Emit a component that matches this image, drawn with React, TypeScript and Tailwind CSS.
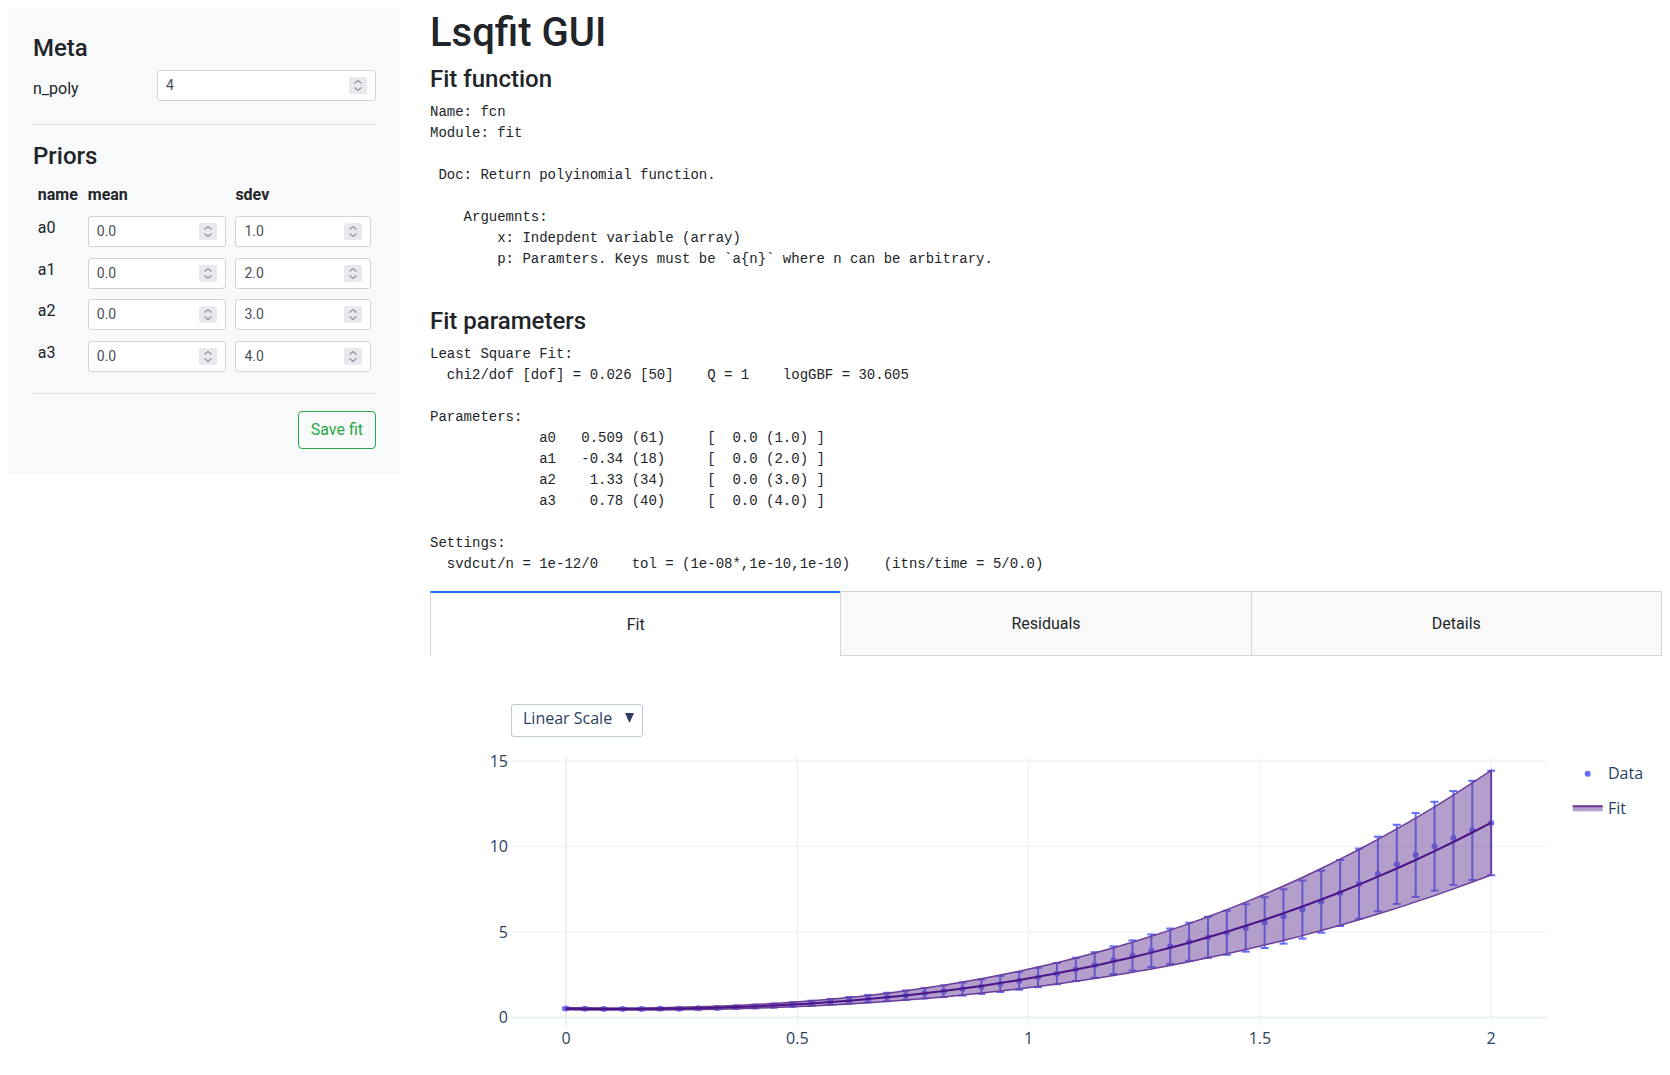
import React from "react";

const fnDoc = `Name: fcn
Module: fit

 Doc: Return polyinomial function.

    Arguemnts:
        x: Indepdent variable (array)
        p: Paramters. Keys must be \`a{n}\` where n can be arbitrary.
    `;

const fitReport = `Least Square Fit:
  chi2/dof [dof] = 0.026 [50]    Q = 1    logGBF = 30.605

Parameters:
             a0   0.509 (61)     [  0.0 (1.0) ]  
             a1   -0.34 (18)     [  0.0 (2.0) ]  
             a2    1.33 (34)     [  0.0 (3.0) ]  
             a3    0.78 (40)     [  0.0 (4.0) ]  

Settings:
  svdcut/n = 1e-12/0    tol = (1e-08*,1e-10,1e-10)    (itns/time = 5/0.0)`;

const priors = [
  { name: "a0", mean: "0.0", sdev: "1.0" },
  { name: "a1", mean: "0.0", sdev: "2.0" },
  { name: "a2", mean: "0.0", sdev: "3.0" },
  { name: "a3", mean: "0.0", sdev: "4.0" },
];

// little up/down arrows of a number field
const Spinner = () => (
  <div className="flex h-[17px] w-[18px] shrink-0 flex-col items-center justify-center gap-[3px] rounded-[2px] bg-[#e9e9ed]">
    <svg width="8" height="4" viewBox="0 0 8 4">
      <path d="M0.5 3.5 L4 0.5 L7.5 3.5" fill="none" stroke="#8f8f9d" strokeWidth="1.1" />
    </svg>
    <svg width="8" height="4" viewBox="0 0 8 4">
      <path d="M0.5 0.5 L4 3.5 L7.5 0.5" fill="none" stroke="#8f8f9d" strokeWidth="1.1" />
    </svg>
  </div>
);

const NumberBox = ({ value }: { value: string }) => (
  <div className="flex h-[31px] items-center rounded-[3px] border border-[#ced4da] bg-white px-2 text-[14px] text-[#495057]">
    <span className="flex-1">{value}</span>
    <Spinner />
  </div>
);

const Sidebar = () => (
  <aside className="w-[391px] shrink-0 bg-[#f8f9fa] px-6 pb-[25px] pt-6">
    <h4 className="mb-[7px] pt-[1px] text-[24px] font-medium leading-[1.2]">Meta</h4>
    <div className="grid grid-cols-[124px_1fr]">
      <label className="py-[7px] text-[16px] leading-6">n_poly</label>
      <NumberBox value="4" />
    </div>

    <hr className="my-4 border-t border-black/10" />

    <h4 className="mb-[7px] pt-[1px] text-[24px] font-medium leading-[1.2]">Priors</h4>
    <div className="grid grid-cols-[50px_147.6px_1fr] text-[16px]">
      <div className="px-[4.8px] pb-[3.8px] pt-[5.8px] font-bold leading-6">name</div>
      <div className="px-[4.8px] pb-[3.8px] pt-[5.8px] font-bold leading-6">mean</div>
      <div className="px-[4.8px] pb-[3.8px] pt-[5.8px] font-bold leading-6">sdev</div>
      {priors.map((p) => (
        <React.Fragment key={p.name}>
          <div className="px-[4.8px] py-[5.25px] leading-6">{p.name}</div>
          <div className="px-[4.8px] py-[5.25px]">
            <NumberBox value={p.mean} />
          </div>
          <div className="px-[4.8px] py-[5.25px]">
            <NumberBox value={p.sdev} />
          </div>
        </React.Fragment>
      ))}
    </div>

    <hr className="my-4 border-t border-black/10" />

    <div className="flex justify-end pt-[1px]">
      <button className="rounded border border-[#28a745] px-3 py-1.5 text-[16px] leading-6 text-[#28a745]">
        Save fit
      </button>
    </div>
  </aside>
);

// ---- chart ----
const X = (v: number) => 136 + 462.6 * v;
const Y = (v: number) => 361.4 - 17.1 * v;

const fit = (x: number) => 0.509 - 0.34 * x + 1.33 * x * x + 0.78 * x * x * x;
const err = (x: number) => 0.061 + 0.479 * Math.pow(x, 2.645);

const xs = Array.from({ length: 50 }, (_, i) => (2 * i) / 49);
const data = xs.map((x, i) => ({
  x,
  y: fit(x) + 0.12 * err(x) * Math.sin(i * 12.9898 + 1.3),
  e: err(x),
}));

const upper = xs.map((x) => `${X(x).toFixed(1)},${Y(fit(x) + err(x)).toFixed(1)}`);
const lower = xs.map((x) => `${X(x).toFixed(1)},${Y(fit(x) - err(x)).toFixed(1)}`);
const mid = xs.map((x) => `${X(x).toFixed(1)},${Y(fit(x)).toFixed(1)}`);
const bandPoints = [...upper, ...[...lower].reverse()].join(" ");

const Chart = () => {
  const font = { fontFamily: "'Open Sans', sans-serif" };
  return (
    <div className="relative h-[450px] w-full">
      <svg width="1232" height="450" className="block" style={font}>
        {/* grid */}
        {[5, 10, 15].map((v) => (
          <line key={v} x1={81} x2={1117} y1={Y(v)} y2={Y(v)} stroke="#ebf0f8" strokeWidth={1} />
        ))}
        {[0.5, 1, 1.5, 2].map((v) => (
          <line key={v} x1={X(v)} x2={X(v)} y1={101} y2={370} stroke="#ebf0f8" strokeWidth={1} />
        ))}
        <line x1={81} x2={1117} y1={Y(0)} y2={Y(0)} stroke="#ebf0f8" strokeWidth={2} />
        <line x1={X(0)} x2={X(0)} y1={101} y2={370} stroke="#ebf0f8" strokeWidth={2} />

        {/* tick labels */}
        {[0, 5, 10, 15].map((v) => (
          <text key={v} x={78} y={Y(v)} dy="0.36em" textAnchor="end" fontSize={16} fill="#2a3f5f">
            {v}
          </text>
        ))}
        {[
          [0, "0"],
          [0.5, "0.5"],
          [1, "1"],
          [1.5, "1.5"],
          [2, "2"],
        ].map(([v, t]) => (
          <text key={t as string} x={X(v as number)} y={382.5} dy="0.36em" textAnchor="middle" fontSize={16} fill="#2a3f5f">
            {t}
          </text>
        ))}

        {/* data with error bars */}
        {data.map((d, i) => (
          <g key={i} stroke="#636efa" strokeWidth={2}>
            <line x1={X(d.x)} x2={X(d.x)} y1={Y(d.y + d.e)} y2={Y(d.y - d.e)} />
            <line x1={X(d.x) - 4} x2={X(d.x) + 4} y1={Y(d.y + d.e)} y2={Y(d.y + d.e)} />
            <line x1={X(d.x) - 4} x2={X(d.x) + 4} y1={Y(d.y - d.e)} y2={Y(d.y - d.e)} />
            <circle cx={X(d.x)} cy={Y(d.y)} r={3} fill="#636efa" stroke="none" />
          </g>
        ))}

        {/* fit band and mean */}
        <polygon points={bandPoints} fill="#6a3d9a" fillOpacity={0.5} stroke="#6a3d9a" strokeWidth={1.5} />
        <polyline points={mid.join(" ")} fill="none" stroke="#4a1486" strokeWidth={2} />

        {/* legend */}
        <circle cx={1157.7} cy={117.7} r={3} fill="#636efa" />
        <text x={1178} y={117.7} dy="0.36em" fontSize={16} fill="#2a3f5f">
          Data
        </text>
        <rect x={1142.7} y={149.3} width={30} height={6} fill="#6a3d9a" fillOpacity={0.5} />
        <line x1={1142.7} x2={1172.7} y1={150.3} y2={150.3} stroke="#6a3d9a" strokeWidth={2} />
        <text x={1178} y={152.3} dy="0.36em" fontSize={16} fill="#2a3f5f">
          Fit
        </text>
      </svg>

      {/* scale menu */}
      <div className="absolute left-[81px] top-[48px] flex h-[33px] w-[132px] items-center rounded-[3px] border border-[#bec8d9] bg-white pb-[4px] pl-[11px] font-['Open_Sans',sans-serif] text-[16px] text-[#2a3f5f]">
        <span className="flex-1">Linear Scale</span>
        <svg width="9" height="10" viewBox="0 0 9 10" className="mr-[8px]">
          <polygon points="0,0 9,0 4.5,10" fill="#2a3f5f" />
        </svg>
      </div>
    </div>
  );
};

const Tabs = () => (
  <div className="flex h-[65px] font-['Roboto',sans-serif] text-[16px] text-[#212529]">
    <div className="flex flex-1 items-center justify-center border-l border-t-2 border-l-[#d6d6d6] border-t-[#1975fa] bg-white pt-[1px]">
      Fit
    </div>
    <div className="flex flex-1 items-center justify-center border-b border-l border-t border-[#d6d6d6] bg-[#f9f9f9] pt-[1px]">
      Residuals
    </div>
    <div className="flex flex-1 items-center justify-center border border-[#d6d6d6] bg-[#f9f9f9] pt-[1px]">
      Details
    </div>
  </div>
);

export default function App() {
  return (
    <div className="min-h-screen bg-white font-['Roboto',sans-serif] text-[#212529]">
      <div className="flex items-start gap-[30px] pl-[9px] pr-[8px] pt-[9px]">
        <Sidebar />
        <main className="min-w-0 flex-1">
          <h1 className="mb-2 text-[40px] font-medium leading-[1.2]">Lsqfit GUI</h1>
          <h4 className="mb-2 text-[24px] font-medium leading-[1.2]">Fit function</h4>
          <pre className="mb-4 font-['Liberation_Mono',monospace] text-[14px] leading-[21px]">{fnDoc}</pre>
          <h4 className="mb-2 text-[24px] font-medium leading-[1.2]">Fit parameters</h4>
          <pre className="mb-4 font-['Liberation_Mono',monospace] text-[14px] leading-[21px]">{fitReport}</pre>
          <Tabs />
          <Chart />
        </main>
      </div>
    </div>
  );
}
